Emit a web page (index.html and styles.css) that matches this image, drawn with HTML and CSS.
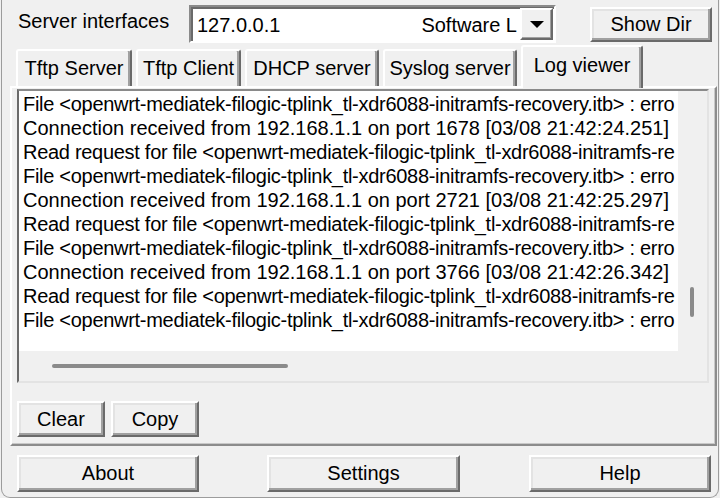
FILE: index.html
```html
<!DOCTYPE html>
<html lang="en">
<head>
    <meta charset="UTF-8">
    <title>Tftpd64 - Log viewer</title>
    <link rel="stylesheet" href="styles.css">
</head>
<body>

<div class="window">
    <!-- interface selector -->
    <div class="top-row">
        <span class="label">Server interfaces</span>
        <div class="combo">
            <span class="combo-value">127.0.0.1</span>
            <span class="combo-desc">Software L</span>
            <span class="combo-arrow"><span class="triangle"></span></span>
        </div>
        <button class="button show-dir">Show Dir</button>
    </div>

    <!-- tabs -->
    <div class="tabs">
        <div class="tab tab-server">Tftp Server</div>
        <div class="tab tab-client">Tftp Client</div>
        <div class="tab tab-dhcp">DHCP server</div>
        <div class="tab tab-syslog">Syslog server</div>
        <div class="tab tab-log active">Log viewer</div>
    </div>

    <div class="panel">
        <div class="listbox">
            <div class="log">
                <div class="line path">File &lt;openwrt-mediatek-filogic-tplink_tl-xdr6088-initramfs-recovery.itb&gt; : erro</div>
                <div class="line">Connection received from 192.168.1.1 on port 1678 [03/08 21:42:24.251]</div>
                <div class="line path">Read request for file &lt;openwrt-mediatek-filogic-tplink_tl-xdr6088-initramfs-re</div>
                <div class="line path">File &lt;openwrt-mediatek-filogic-tplink_tl-xdr6088-initramfs-recovery.itb&gt; : erro</div>
                <div class="line">Connection received from 192.168.1.1 on port 2721 [03/08 21:42:25.297]</div>
                <div class="line path">Read request for file &lt;openwrt-mediatek-filogic-tplink_tl-xdr6088-initramfs-re</div>
                <div class="line path">File &lt;openwrt-mediatek-filogic-tplink_tl-xdr6088-initramfs-recovery.itb&gt; : erro</div>
                <div class="line">Connection received from 192.168.1.1 on port 3766 [03/08 21:42:26.342]</div>
                <div class="line path">Read request for file &lt;openwrt-mediatek-filogic-tplink_tl-xdr6088-initramfs-re</div>
                <div class="line path">File &lt;openwrt-mediatek-filogic-tplink_tl-xdr6088-initramfs-recovery.itb&gt; : erro</div>
            </div>
            <div class="vscroll"><div class="vthumb"></div></div>
            <div class="hscroll"><div class="hthumb"></div></div>
            <div class="corner"></div>
        </div>
        <div class="log-buttons">
            <button class="button small">Clear</button>
            <button class="button small">Copy</button>
        </div>
    </div>

    <div class="bottom-row">
        <button class="button wide about">About</button>
        <button class="button wide settings">Settings</button>
        <button class="button wide help">Help</button>
    </div>
</div>

</body>
</html>
```

FILE: styles.css
```css
/* window frame */
body {
    margin: 0;
    padding: 0;
    background-color: #f0f0f0;
    font-family: "Liberation Sans", Arial, sans-serif;
    font-size: 20px;
    color: #000;
}

.window {
    width: 718px;
    height: 498px;
    margin-left: 1px;
    box-sizing: border-box;
    border: 1px solid #9c9c9c;
    border-top: none;
    border-radius: 0 0 9px 9px;
    background-color: #f0f0f0;
    overflow: hidden;
}

/* generic raised button */
.button {
    box-sizing: border-box;
    font-family: inherit;
    font-size: 20px;
    color: #000;
    background-color: #f0f0f0;
    border: 2px solid;
    border-color: #ffffff #6a6a6a #6a6a6a #ffffff;
    box-shadow: inset -2px -2px 0 #a0a0a0, inset 2px 2px 0 #e3e3e3;
    padding: 0;
    cursor: pointer;
}

/* top row */
.top-row {
    display: flex;
    align-items: flex-start;
    height: 46px;
    padding-top: 5px;
    box-sizing: border-box;
}

.label {
    margin-left: 16px;
    margin-top: 4px;
    width: 171px;
    line-height: 24px;
}

.combo {
    display: flex;
    align-items: flex-start;
    width: 367px;
    height: 38px;
    box-sizing: border-box;
    border: 2px solid;
    border-color: #8a8a8a #ffffff #ffffff #8a8a8a;
    box-shadow: inset 2px 2px 0 #6a6a6a;
    background-color: #fff;
}

.combo-value {
    margin-left: 6px;
    margin-top: 6px;
    line-height: 24px;
    flex: 1;
}

.combo-desc {
    margin-top: 6px;
    line-height: 24px;
    margin-right: 3px;
}

.combo-arrow {
    display: flex;
    align-items: center;
    justify-content: center;
    width: 33px;
    height: 32px;
    margin-top: 1px;
    margin-right: 1px;
    box-sizing: border-box;
    background-color: #f0f0f0;
    border: 2px solid;
    border-color: #ffffff #6a6a6a #6a6a6a #ffffff;
    box-shadow: inset -1px -1px 0 #a0a0a0;
}

.triangle {
    width: 0;
    height: 0;
    border-left: 7px solid transparent;
    border-right: 7px solid transparent;
    border-top: 7px solid #000;
    margin-top: 1px;
}

.show-dir {
    margin-left: 34px;
    margin-top: 2px;
    width: 122px;
    height: 35px;
}

/* tabs */
.tabs {
    display: flex;
    align-items: flex-end;
    height: 40px;
    padding-left: 14px;
    position: relative;
    z-index: 2;
}

.tab {
    box-sizing: border-box;
    height: 37px;
    line-height: 35px;
    text-align: center;
    margin-right: 4px;
    background-color: #f0f0f0;
    border: 2px solid;
    border-bottom: none;
    border-color: #ffffff #6a6a6a #6a6a6a #ffffff;
    box-shadow: inset -2px 0 0 #a0a0a0;
    border-radius: 3px 3px 0 0;
}

.tab-server { width: 116px; }
.tab-client { width: 105px; }
.tab-dhcp { width: 134px; margin-right: 4px; }
.tab-syslog { width: 134px; }

.tab.active {
    width: 122px;
    height: 43px;
    line-height: 36px;
    margin-bottom: -2px;
    margin-right: 0;
}

/* tab page */
.panel {
    margin-left: 8px;
    width: 707px;
    height: 360px;
    box-sizing: border-box;
    border: 2px solid;
    border-color: #ffffff #8c8c8c #8c8c8c #ffffff;
    box-shadow: inset -1px -1px 0 #c8c8c8;
    padding: 1px 0 0 5px;
}

.listbox {
    display: grid;
    grid-template-columns: 659px 29px;
    grid-template-rows: 260px 30px;
    width: 692px;
    height: 294px;
    box-sizing: border-box;
    border: 2px solid;
    border-color: #8a8a8a #e3e3e3 #e3e3e3 #6a6a6a;
}

.log {
    background-color: #fff;
    overflow: hidden;
    padding-left: 4px;
    padding-top: 1px;
}

.line {
    white-space: nowrap;
    line-height: 24px;
}

/* file paths render narrower in the original font */
.line.path {
    letter-spacing: -0.29px;
}

.vscroll {
    background-color: #f0f0f0;
    padding-left: 12px;
    padding-top: 196px;
}

.vthumb {
    width: 4px;
    height: 30px;
    border-radius: 2px;
    background-color: #8a8a8a;
}

.hscroll {
    background-color: #f0f0f0;
    padding-left: 33px;
    padding-top: 13px;
}

.hthumb {
    width: 236px;
    height: 4px;
    border-radius: 2px;
    background-color: #8a8a8a;
}

.corner {
    background-color: #f0f0f0;
}

.log-buttons {
    display: flex;
    gap: 6px;
    margin-top: 18px;
}

.small {
    width: 88px;
    height: 36px;
}

/* bottom buttons */
.bottom-row {
    display: flex;
    margin-top: 9px;
    padding-left: 15px;
}

.wide {
    height: 37px;
}

.about { width: 182px; }
.settings { width: 193px; margin-left: 68px; }
.help { width: 182px; margin-left: 69px; }
```
